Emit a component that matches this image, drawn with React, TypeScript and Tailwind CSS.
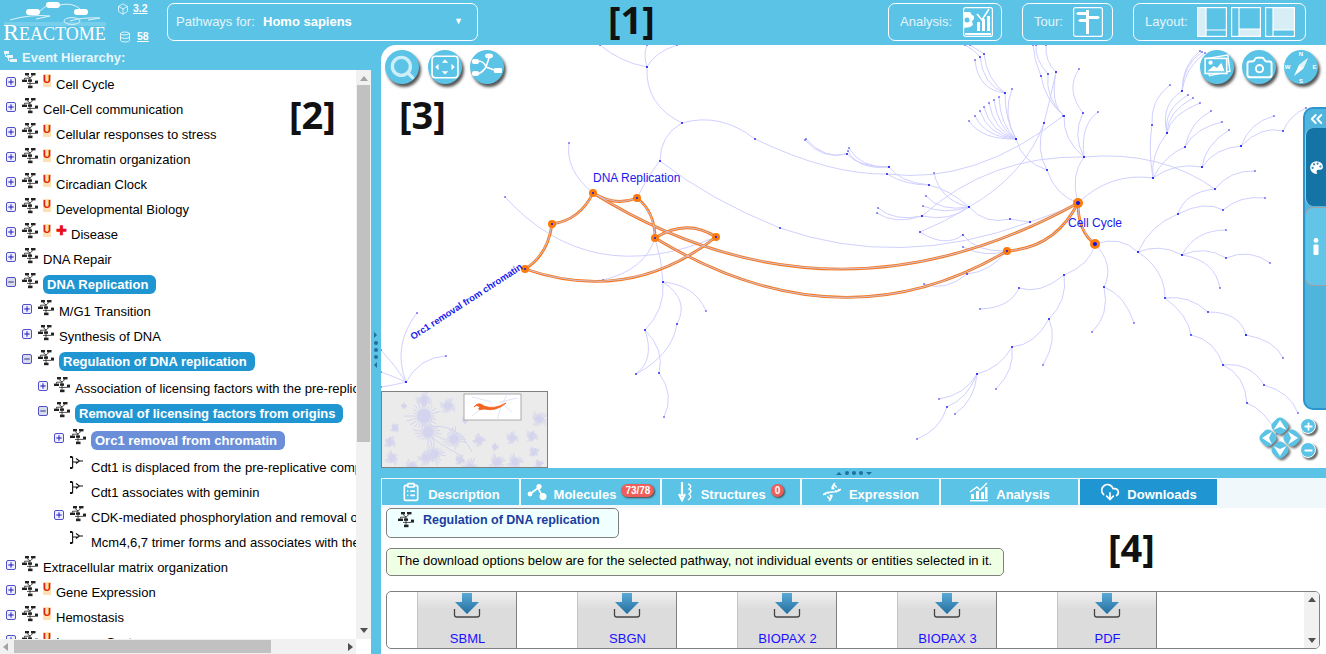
import React from 'react';
import { Box, Database, ClipboardList, Dna, CloudDownload, Camera, Palette, Plus, Minus, ChevronsLeft, Search } from 'lucide-react';

type Row = {
  label: string;
  level: number;
  toggle?: '+' | '-';
  kind?: 'pathway' | 'reaction';
  unique?: boolean;
  disease?: boolean;
  pill?: string;
};

const rows: Row[] = [
  { label: 'Cell Cycle', level: 0, toggle: '+', unique: true },
  { label: 'Cell-Cell communication', level: 0, toggle: '+' },
  { label: 'Cellular responses to stress', level: 0, toggle: '+', unique: true },
  { label: 'Chromatin organization', level: 0, toggle: '+', unique: true },
  { label: 'Circadian Clock', level: 0, toggle: '+', unique: true },
  { label: 'Developmental Biology', level: 0, toggle: '+', unique: true },
  { label: 'Disease', level: 0, toggle: '+', unique: true, disease: true },
  { label: 'DNA Repair', level: 0, toggle: '+' },
  { label: 'DNA Replication', level: 0, toggle: '-', pill: 'bg-[#1f96d2]' },
  { label: 'M/G1 Transition', level: 1, toggle: '+' },
  { label: 'Synthesis of DNA', level: 1, toggle: '+' },
  { label: 'Regulation of DNA replication', level: 1, toggle: '-', pill: 'bg-[#1f96d2]' },
  { label: 'Association of licensing factors with the pre-replicative complex', level: 2, toggle: '+' },
  { label: 'Removal of licensing factors from origins', level: 2, toggle: '-', pill: 'bg-[#1f96d2]' },
  { label: 'Orc1 removal from chromatin', level: 3, toggle: '+', pill: 'bg-[#6a8fd8]' },
  { label: 'Cdt1 is displaced from the pre-replicative complex', level: 3, kind: 'reaction' },
  { label: 'Cdt1 associates with geminin', level: 3, kind: 'reaction' },
  { label: 'CDK-mediated phosphorylation and removal of Cdc6', level: 3, toggle: '+' },
  { label: 'Mcm4,6,7 trimer forms and associates with the replication fork', level: 3, kind: 'reaction' },
  { label: 'Extracellular matrix organization', level: 0, toggle: '+' },
  { label: 'Gene Expression', level: 0, toggle: '+', unique: true },
  { label: 'Hemostasis', level: 0, toggle: '+', unique: true },
  { label: 'Immune System', level: 0, toggle: '+', unique: true },
];

const indent = ['pl-[6px]', 'pl-[22px]', 'pl-[38px]', 'pl-[54px]'];

// x1, y1, cx, cy, x2, y2 in page coordinates
const edges: number[][] = [
  [647, 67, 620, 62, 600, 45], [647, 67, 643, 55, 647, 45], [647, 67, 655, 52, 677, 45],
  [647, 67, 645, 105, 682, 123], [682, 123, 720, 112, 755, 139], [755, 139, 830, 175, 887, 174],
  [682, 123, 660, 135, 660, 161], [660, 161, 650, 172, 637, 198], [660, 161, 710, 200, 780, 228],
  [780, 228, 900, 270, 1030, 222], [1030, 222, 1060, 212, 1078, 203],
  [569, 143, 565, 170, 593, 193],
  [505, 197, 590, 290, 716, 237], [603, 280, 645, 270, 655, 238], [655, 238, 662, 260, 663, 282],
  [663, 282, 695, 285, 706, 311], [663, 282, 690, 300, 677, 324], [663, 282, 665, 310, 645, 330],
  [645, 330, 655, 360, 636, 374], [645, 330, 665, 350, 659, 373], [677, 324, 672, 355, 636, 374],
  [659, 373, 675, 395, 664, 417],
  [406, 382, 392, 345, 417, 313], [406, 382, 420, 357, 446, 356], [406, 382, 395, 365, 381, 350],
  [406, 382, 395, 377, 381, 372], [406, 382, 395, 385, 381, 387],
  [887, 174, 975, 185, 1063, 116], [887, 174, 905, 185, 929, 185], [889, 167, 900, 182, 929, 185],
  [889, 167, 860, 168, 849, 148], [889, 167, 858, 170, 848, 151], [889, 167, 858, 167, 847, 154],
  [847, 154, 825, 160, 806, 139], [847, 154, 822, 160, 805, 140],
  [980, 57, 983, 85, 1005, 93], [975, 60, 978, 90, 1005, 93], [984, 54, 987, 80, 1005, 93],
  [980, 57, 975, 50, 965, 45], [984, 54, 978, 50, 970, 45],
  [1005, 93, 1005, 120, 1016, 139], [1012, 89, 1002, 115, 1016, 139],
  [999, 97, 1000, 125, 1016, 139], [994, 100, 998, 128, 1016, 139], [989, 103, 994, 130, 1016, 139],
  [984, 107, 990, 132, 1016, 139], [980, 111, 988, 135, 1016, 139], [975, 116, 985, 137, 1016, 139],
  [969, 121, 982, 140, 1016, 139], [1016, 139, 1022, 162, 1047, 170], [1047, 170, 1055, 195, 1078, 203],
  [1044, 123, 1035, 150, 1047, 170],
  [1056, 72, 1050, 100, 1044, 123], [1044, 123, 1025, 175, 969, 207], [969, 207, 945, 222, 920, 232],
  [1056, 72, 1045, 62, 1046, 45], [1048, 74, 1035, 60, 1036, 45], [1041, 76, 1034, 60, 1033, 45],
  [1056, 72, 1050, 105, 1064, 116], [1048, 74, 1045, 98, 1064, 116], [1041, 76, 1045, 100, 1064, 116],
  [1064, 116, 1063, 140, 1084, 157], [1083, 113, 1072, 135, 1084, 157], [1098, 112, 1080, 125, 1084, 157],
  [1079, 69, 1065, 90, 1083, 113], [1078, 203, 1070, 175, 1084, 157],
  [1084, 157, 990, 155, 922, 216], [1084, 157, 1160, 150, 1215, 189],
  [934, 173, 940, 200, 969, 207], [929, 185, 950, 190, 969, 207], [926, 196, 940, 212, 969, 207],
  [923, 206, 945, 215, 969, 207], [922, 216, 950, 222, 969, 207], [969, 207, 985, 225, 1010, 219],
  [1010, 219, 1020, 221, 1030, 222], [878, 208, 895, 222, 922, 216], [877, 213, 895, 225, 922, 216],
  [920, 232, 945, 248, 963, 235], [963, 235, 975, 252, 1007, 251], [963, 247, 985, 258, 1007, 251],
  [1007, 251, 990, 272, 967, 274], [967, 274, 945, 292, 924, 284],
  [1078, 203, 1110, 172, 1153, 178], [1153, 178, 1148, 150, 1152, 125], [1153, 178, 1150, 155, 1167, 133],
  [1152, 125, 1150, 100, 1170, 85], [1167, 133, 1160, 105, 1182, 91], [1167, 133, 1163, 110, 1188, 95],
  [1167, 133, 1167, 112, 1193, 98], [1167, 133, 1170, 115, 1200, 103],
  [1182, 91, 1182, 65, 1200, 51], [1182, 91, 1183, 65, 1202, 52], [1182, 91, 1185, 68, 1205, 53],
  [1153, 178, 1165, 155, 1185, 147], [1185, 147, 1190, 122, 1211, 111], [1185, 147, 1195, 128, 1222, 122],
  [1153, 178, 1175, 162, 1202, 167], [1202, 167, 1205, 145, 1229, 130], [1202, 167, 1215, 148, 1241, 146],
  [1241, 146, 1250, 122, 1274, 116], [1241, 146, 1262, 125, 1283, 131], [1283, 131, 1290, 115, 1306, 108],
  [1215, 189, 1230, 170, 1255, 171], [1178, 214, 1185, 192, 1215, 189], [1138, 252, 1150, 225, 1178, 214],
  [1178, 214, 1205, 200, 1223, 210], [1223, 210, 1240, 195, 1265, 198],
  [1095, 244, 1120, 235, 1138, 252], [1138, 252, 1160, 243, 1182, 255], [1138, 252, 1165, 270, 1165, 298],
  [1182, 255, 1195, 230, 1226, 230], [1182, 255, 1205, 245, 1226, 258], [1182, 255, 1215, 260, 1220, 288],
  [1165, 298, 1190, 295, 1208, 312], [1165, 298, 1188, 315, 1191, 335], [1191, 335, 1215, 340, 1223, 365],
  [1208, 312, 1240, 312, 1246, 335], [1246, 335, 1275, 340, 1283, 358], [1223, 365, 1250, 362, 1264, 385],
  [1223, 365, 1245, 375, 1247, 403], [1264, 385, 1290, 392, 1298, 413], [1247, 403, 1265, 410, 1277, 434],
  [1226, 258, 1250, 248, 1270, 263],
  [1095, 244, 1115, 265, 1104, 287], [1104, 287, 1125, 295, 1134, 323], [1104, 287, 1110, 315, 1092, 332],
  [1095, 244, 1090, 265, 1064, 275], [1064, 275, 1040, 295, 1019, 288], [1019, 288, 1010, 308, 980, 309],
  [1064, 275, 1068, 300, 1049, 319], [1049, 319, 1058, 340, 1043, 365], [1049, 319, 1035, 345, 1012, 347],
  [1012, 347, 1015, 370, 996, 389], [1012, 347, 1000, 368, 977, 374], [977, 374, 965, 395, 939, 399],
  [977, 374, 968, 398, 947, 407], [977, 374, 975, 400, 955, 414], [947, 407, 940, 430, 917, 439],
];

// nodes drawn a little larger than the rest
const hubs = [[406, 382], [1016, 139], [1153, 178], [1202, 167], [1241, 146], [1138, 252], [1182, 255], [1167, 133], [1246, 335]];

// x1, y1, cx, cy, x2, y2
const orangeEdges: number[][] = [
  [525, 269, 548, 255, 552, 224], [552, 224, 580, 220, 593, 193], [593, 193, 615, 207, 637, 198],
  [637, 198, 655, 212, 655, 238], [655, 238, 687, 218, 716, 237], [525, 269, 630, 305, 716, 237],
  [593, 193, 830, 340, 1078, 203], [655, 238, 840, 350, 1007, 251], [1007, 251, 1055, 248, 1078, 203],
  [1078, 203, 1078, 232, 1095, 244],
];

const orangeNodes = [
  [525, 269, 4], [552, 224, 4], [593, 193, 4], [637, 198, 4], [655, 238, 4], [716, 237, 4],
  [1007, 251, 4], [1078, 203, 5], [1095, 244, 5],
];

// cx, cy, r in minimap coordinates
const stars = [
  [42, 24, 20], [46, 40, 15], [42, 8, 9], [66, 14, 9], [8, 50, 7], [13, 36, 5], [10, 66, 8], [52, 62, 12],
  [72, 47, 13], [44, 66, 9], [88, 76, 11], [78, 68, 6], [30, 75, 9], [115, 70, 9], [133, 70, 9], [97, 48, 7],
  [113, 55, 4], [130, 46, 7], [150, 44, 7], [157, 27, 9], [152, 60, 6], [157, 72, 5], [83, 28, 4], [22, 14, 3],
];

const PathwayIcon = () => (
  <svg width="16" height="16" viewBox="0 0 16 16" className="shrink-0">
    <g fill="#222">
      <rect x="3" y="0" width="4" height="2.4" />
      <rect x="9" y="0" width="4.5" height="2.4" />
      <rect x="0" y="6.6" width="5" height="2.4" />
      <rect x="6" y="6.4" width="4" height="2.4" />
      <rect x="13" y="7.6" width="3" height="3" />
      <rect x="6" y="12.6" width="4.5" height="2.6" />
    </g>
    <path d="M5 2.4 L8 5 L11 2.4 M8 5 V12.6 M2.5 6.6 V5.2 H8 M5 10.4 H13" stroke="#222" strokeWidth="0.8" fill="none" />
  </svg>
);

const ReactionIcon = () => (
  <svg width="14" height="14" viewBox="0 0 14 14" className="shrink-0">
    <path d="M1 1 H2.6 V12 H1 M2.6 6 H8 M6 2.5 L9.5 5 L6 7.5 M9.5 5 H13" stroke="#111" strokeWidth="1.1" fill="none" />
    <rect x="0" y="0" width="2" height="2" fill="#111" />
    <rect x="0" y="11" width="2" height="2" fill="#111" />
  </svg>
);

const Toggle = ({ sign }: { sign: '+' | '-' }) => (
  <div className={`w-[10px] h-[10px] shrink-0 rounded-[2px] border border-[#5050c8] flex items-center justify-center ${sign === '+' ? 'bg-[#eeeeff]' : 'bg-[#d8dcec]'}`}>
    {sign === '+' ? (
      <Plus size={8} strokeWidth={3} className="text-[#1a1ac0]" />
    ) : (
      <Minus size={8} strokeWidth={3} className="text-[#30307a]" />
    )}
  </div>
);

const TreeRow = ({ row }: { row: Row }) => (
  <div className={`flex items-start whitespace-nowrap ${row.pill ? 'h-[27px]' : 'h-[25px]'} ${indent[row.level]}`}>
    <div className="w-[10px] mt-[5px] mr-[6px] shrink-0">{row.toggle && <Toggle sign={row.toggle} />}</div>
    <div className="w-[16px] mt-[1px] shrink-0">{row.kind === 'reaction' ? <ReactionIcon /> : <PathwayIcon />}</div>
    {row.unique && (
      <span className="ml-[5px] mt-[2px] w-[8px] h-[13px] bg-[#fde0b4] text-[#e02000] text-[11px] leading-[11px] font-bold text-center shrink-0">U</span>
    )}
    {row.disease && (
      <span className="ml-[5px] mt-[3px] w-[10px] text-[#e8101a] text-[13px] leading-[11px] font-black shrink-0">✚</span>
    )}
    {row.pill ? (
      <span className={`ml-[5px] mt-[3px] pl-[4px] pr-[8px] h-[19px] leading-[19px] rounded-[6px] text-white font-bold text-[13px] ${row.pill}`}>{row.label}</span>
    ) : (
      <span className="ml-[5px] leading-[25px] text-[13px] text-black">{row.label}</span>
    )}
  </div>
);

const Logo = () => (
  <div className="relative w-[110px] h-[45px] shrink-0">
    <svg width="110" height="45" viewBox="0 0 110 45" className="absolute left-0 top-0">
      <g fill="#ffffff">
        <rect x="26" y="9" width="14" height="6" rx="3" />
        <rect x="46" y="2" width="14" height="6" rx="3" />
        <rect x="74" y="9" width="14" height="6" rx="3" />
      </g>
      <path d="M60 5 C68 3 76 5 80 9 M40 11 L46 6 M10 20 Q30 14 50 16 L36 19 M70 21 Q82 17 100 18 L88 20" stroke="#dff3fa" strokeWidth="1" fill="none" />
      <ellipse cx="72" cy="21" rx="8" ry="3.4" fill="none" stroke="#dff3fa" strokeWidth="1" />
      <path d="M4 23 H106 M4 25 H106" stroke="#cfeef8" strokeWidth="0.5" />
    </svg>
    <div className="absolute left-[3px] top-[21px] text-white font-['Liberation_Serif',serif] leading-[22px] whitespace-nowrap">
      <span className="text-[24px]">R</span>
      <span className="text-[18px]">EACTOME</span>
    </div>
  </div>
);

const LayoutIcon = ({ variant }: { variant: number }) => (
  <svg width="30" height="30" viewBox="0 0 30 30" className="shrink-0">
    {variant === 0 && <><rect x="1" y="1" width="8" height="28" fill="#d8eef6" /><path d="M9 1 V29 M9 23 H29" stroke="#fff" strokeWidth="1.2" /></>}
    {variant === 1 && <><rect x="8" y="22" width="21" height="7" fill="#d8eef6" /><path d="M8 1 V29 M8 22 H29" stroke="#fff" strokeWidth="1.2" /></>}
    {variant === 2 && <><rect x="8" y="1" width="21" height="22" fill="#d8eef6" /><path d="M8 1 V29 M8 23 H29" stroke="#fff" strokeWidth="1.2" /></>}
    <rect x="0.6" y="0.6" width="28.8" height="28.8" fill="none" stroke="#fff" strokeWidth="1.2" />
  </svg>
);

const AnalysisIcon = () => (
  <svg width="30" height="30" viewBox="0 0 30 30" className="shrink-0">
    <rect x="0.6" y="0.6" width="28.8" height="28.8" rx="2" fill="none" stroke="#fff" strokeWidth="1.2" />
    <path d="M1 5 H7 L9 8 L11 9 V12 L9 14 L10 18 L7 20 L1 21 Z" fill="#fff" />
    <circle cx="4" cy="13" r="2.5" fill="#5bc3e6" />
    <path d="M14 7 L19 13 L26 2" stroke="#fff" strokeWidth="1.6" fill="none" />
    <rect x="14" y="15" width="3" height="9" fill="#fff" />
    <rect x="19" y="12" width="3" height="12" fill="#fff" />
    <rect x="24" y="9" width="3" height="15" fill="#fff" />
    <rect x="2" y="26" width="26" height="2" fill="#fff" />
  </svg>
);

const TourIcon = () => (
  <svg width="30" height="30" viewBox="0 0 30 30" className="shrink-0">
    <rect x="0.6" y="0.6" width="28.8" height="28.8" rx="2" fill="none" stroke="#fff" strokeWidth="1.2" />
    <rect x="13" y="3" width="3" height="24" fill="#fff" />
    <path d="M13 5 H5 L3 6.5 L5 8 H13 Z M16 9 H25 L27 10.5 L25 12 H16 Z M13 12 H7 L5 13.5 L7 15 H13 Z" fill="#fff" />
  </svg>
);

const RoundButton = ({ className, children }: { className: string; children: React.ReactNode }) => (
  <div className={`absolute w-[34px] h-[34px] rounded-full bg-[#5bc3e6] shadow-[2px_3px_3px_#555] flex items-center justify-center text-white ${className}`}>
    {children}
  </div>
);

const CompassIcon = () => (
  <svg width="34" height="34" viewBox="0 0 34 34">
    <path d="M24 8 L19 19 L10 26 L15 15 Z" fill="#fff" />
    <path d="M24 8 L15 15 L19 19 Z" fill="#dff3fa" />
    <g fill="#fff" fontSize="6" fontWeight="bold" textAnchor="middle" fontFamily="Liberation Sans">
      <text x="17" y="6">N</text>
      <text x="17" y="33">S</text>
      <text x="3.5" y="19">W</text>
      <text x="30.5" y="19">E</text>
    </g>
  </svg>
);

const NavPad = () => (
  <svg width="48" height="48" viewBox="0 0 48 48" className="absolute left-[875px] top-[369px] drop-shadow-[2px_2px_1px_#777]">
    {[0, 90, 180, 270].map(angle => (
      <g key={angle} transform={`rotate(${angle} 24 24)`}>
        <rect x="-7.5" y="-7.5" width="15" height="15" rx="5" fill="#5bc3e6" transform="translate(24 12) rotate(45)" />
        <path d="M24 6 L30.5 16 L24 13 L17.5 16 Z" fill="#fff" />
      </g>
    ))}
  </svg>
);

const Minimap = () => (
  <div className="absolute left-0 top-[346px] w-[167px] h-[77px] bg-[#ebebeb] border border-[#808080] overflow-hidden">
    <svg width="165" height="75" viewBox="0 0 165 75" className="absolute left-0 top-0">
      {stars.map(([cx, cy, r], i) => (
        <g key={i} stroke="#d4d4ee" strokeWidth="1">
          {Array.from({ length: 22 }).map((_, k) => {
            const a = (k / 22) * Math.PI * 2 + i;
            const len = r * (0.55 + ((k * 7 + i * 3) % 6) * 0.09);
            return <line key={k} x1={cx} y1={cy} x2={cx + Math.cos(a) * len} y2={cy + Math.sin(a) * len} />;
          })}
          <circle cx={cx} cy={cy} r={r * 0.35} fill="#d4d4ee" stroke="none" />
        </g>
      ))}
      <path d="M35 27 Q45 12 43 38 Q52 50 80 64 M47 35 Q75 30 90 60" stroke="#d4d4ee" fill="none" />
      <rect x="82" y="2" width="57" height="26" fill="#fff" stroke="#aaa" strokeWidth="1" />
      <g stroke="#dcdcf4" strokeWidth="0.8" fill="none">
        <path d="M125 2 L118 18 M118 10 L135 6 M118 10 L130 20 M90 5 L110 10 M115 28 L118 18 M90 24 L100 16" />
      </g>
      <path d="M92 15 Q96 9 102 14 Q112 18 124 11 Q114 20 102 17 Q94 19 98 15 Q94 12 92 15 Z" fill="#f2631f" stroke="#f2631f" strokeWidth="0.8" />
    </svg>
  </div>
);

const Canvas = () => (
  <div className="relative h-[423px] bg-white rounded-tl-[15px] overflow-hidden shrink-0">
    <svg width="945" height="423" viewBox="381 45 945 423" className="absolute left-0 top-0">
      <g fill="none" stroke="#d0d0ff" strokeWidth="1">
        {edges.map((e, i) => (
          <path key={i} d={`M${e[0]} ${e[1]} Q${e[2]} ${e[3]} ${e[4]} ${e[5]}`} />
        ))}
      </g>
      <g fill="#3030f0">
        {edges.map((e, i) => (
          <React.Fragment key={i}>
            <rect x={e[0] - 0.7} y={e[1] - 0.7} width="1.4" height="1.4" />
            <rect x={e[4] - 0.7} y={e[5] - 0.7} width="1.4" height="1.4" />
          </React.Fragment>
        ))}
        {hubs.map(([x, y], i) => (
          <rect key={i} x={x - 1} y={y - 1} width="2" height="2" />
        ))}
      </g>
      <g fill="none">
        {orangeEdges.map((e, i) => (
          <path key={i} d={`M${e[0]} ${e[1]} Q${e[2]} ${e[3]} ${e[4]} ${e[5]}`} stroke="#f9781a" strokeWidth="2.8" />
        ))}
        {orangeEdges.map((e, i) => (
          <path key={i} d={`M${e[0]} ${e[1]} Q${e[2]} ${e[3]} ${e[4]} ${e[5]}`} stroke="#c8c8f0" strokeWidth="0.9" />
        ))}
      </g>
      {orangeNodes.map(([x, y, r], i) => (
        <g key={i}>
          <circle cx={x} cy={y} r={r} fill="#fb7a0c" />
          <circle cx={x} cy={y} r={r > 4 ? 2 : 1} fill="#1010ee" />
        </g>
      ))}
      <text x="593" y="182" fontSize="12" fill="#1a1aee" fontFamily="Liberation Sans">DNA Replication</text>
      <text x="1068" y="227" fontSize="12" fill="#1a1aee" fontFamily="Liberation Sans">Cell Cycle</text>
      <text x="413" y="340" fontSize="9.4" fontWeight="bold" fill="#1a1aee" fontFamily="Liberation Sans" transform="rotate(-33 413 340)">Orc1 removal from chromatin</text>
    </svg>

    <Minimap />

    <RoundButton className="left-[4px] top-[5px]">
      <Search size={27} strokeWidth={3} className="text-[#cdeef9]" />
    </RoundButton>
    <RoundButton className="left-[47px] top-[5px]">
      <svg width="28" height="24" viewBox="0 0 26 22">
        <rect x="1" y="1" width="24" height="20" rx="3" fill="none" stroke="#fff" strokeWidth="1.5" />
        <path d="M13 4 L16 7 H10 Z M13 18 L16 15 H10 Z M4 11 L7 8 V14 Z M22 11 L19 8 V14 Z" fill="#fff" />
      </svg>
    </RoundButton>
    <RoundButton className="left-[89px] top-[5px]">
      <svg width="30" height="28" viewBox="0 0 30 28">
        <path d="M6 8 Q12 8 14 14 Q11 19 6 21 M14 14 L17 5 M14 14 L25 18" stroke="#fff" strokeWidth="1.6" fill="none" />
        <rect x="0" y="6" width="7" height="5" rx="2" fill="#fff" />
        <rect x="0" y="18" width="7" height="5" rx="2" fill="#fff" />
        <ellipse cx="17" cy="3" rx="4" ry="2.4" fill="#fff" />
        <rect x="22" y="15" width="8" height="5" rx="1" fill="#fff" />
      </svg>
    </RoundButton>

    <RoundButton className="left-[819px] top-[5px]">
      <svg width="28" height="26" viewBox="0 0 26 24">
        <path d="M4 4 L23 1 L25 16 L6 20 Z" fill="none" stroke="#fff" strokeWidth="1.3" />
        <rect x="2" y="4" width="20" height="14" fill="#5bc3e6" stroke="#fff" strokeWidth="1.5" />
        <circle cx="7" cy="8" r="2" fill="#fff" />
        <path d="M4 16 L10 11 L13 13 L17 8 L20 16 Z" fill="#fff" />
      </svg>
    </RoundButton>
    <RoundButton className="left-[861px] top-[5px]">
      <Camera size={29} strokeWidth={1.6} />
    </RoundButton>
    <RoundButton className="left-[903px] top-[5px]">
      <CompassIcon />
    </RoundButton>

    {/* side panel */}
    <div className="absolute left-[922px] top-[62px] w-[23px] h-[303px] rounded-l-[10px] border-[2px] border-r-0 border-[#2a95cf] bg-[#4fb5dd] flex flex-col">
      <div className="h-[19px] flex items-center pl-[2px] text-white">
        <ChevronsLeft size={20} strokeWidth={2.4} />
      </div>
      <div className="h-[78px] rounded-l-[8px] bg-[#1474a6] border-l border-[#9fd0e6] flex items-center justify-center text-white">
        <Palette size={17} fill="#fff" className="text-[#1474a6]" />
      </div>
      <div className="h-[79px] mt-[1px] rounded-l-[8px] bg-[#62c4e6] border border-r-0 border-[#a89f9f] flex items-center justify-center">
        <svg width="6" height="17" viewBox="0 0 6 17">
          <circle cx="3" cy="2.4" r="2.4" fill="#fff" />
          <rect x="0.5" y="6.5" width="5" height="10.5" rx="1" fill="#fff" />
        </svg>
      </div>
    </div>

    {/* navigation */}
    <NavPad />
    <div className="absolute left-[919px] top-[373px] w-[16px] h-[16px] rounded-full bg-[#5bc3e6] border border-white shadow-[2px_2px_2px_#666] flex items-center justify-center text-white"><Plus size={11} strokeWidth={4} /></div>
    <div className="absolute left-[919px] top-[397px] w-[16px] h-[16px] rounded-full bg-[#5bc3e6] border border-white shadow-[2px_2px_2px_#666] flex items-center justify-center text-white"><Minus size={11} strokeWidth={4} /></div>
  </div>
);

const MoleculesIcon = () => (
  <svg width="20" height="18" viewBox="0 0 20 18">
    <path d="M3 11 L11 5 L16 14" stroke="#fff" strokeWidth="1.6" fill="none" />
    <circle cx="3" cy="11" r="2.4" fill="#fff" />
    <circle cx="12" cy="3.5" r="2.6" fill="#fff" />
    <circle cx="16" cy="13.5" r="3.5" fill="#fff" />
  </svg>
);

const StructuresIcon = () => (
  <svg width="16" height="20" viewBox="0 0 16 20">
    <path d="M4 0 V14 M1 12 L4 18 L7 12" stroke="#fff" strokeWidth="2.2" fill="none" />
    <path d="M10 2 Q15 4 11 7 Q15 9 11 12 Q15 15 10 18" stroke="#fff" strokeWidth="1.4" fill="none" />
  </svg>
);

const ChartIcon = () => (
  <svg width="20" height="20" viewBox="0 0 20 20">
    <path d="M1 10 L8 5 L11 8 L18 1" stroke="#fff" strokeWidth="1.4" fill="none" />
    <rect x="2" y="12" width="3" height="5" fill="#fff" />
    <rect x="7" y="9" width="3" height="8" fill="#fff" />
    <rect x="12" y="10" width="3" height="7" fill="#fff" />
    <rect x="16" y="5" width="2.5" height="12" fill="#fff" />
    <rect x="1" y="18" width="18" height="1.4" fill="#fff" />
  </svg>
);

const tabs = [
  { label: 'Description', width: 'w-[137px]', icon: <ClipboardList size={20} /> },
  { label: 'Molecules', width: 'w-[139px]', icon: <MoleculesIcon />, badge: '73/78' },
  { label: 'Structures', width: 'w-[138px]', icon: <StructuresIcon />, badge: '0' },
  { label: 'Expression', width: 'w-[137px]', icon: <Dna size={20} /> },
  { label: 'Analysis', width: 'w-[137px]', icon: <ChartIcon /> },
  { label: 'Downloads', width: 'w-[137px]', icon: <CloudDownload size={20} />, active: true },
];

const DownloadIcon = () => (
  <svg width="28" height="30" viewBox="0 0 28 30" className="shrink-0">
    <defs>
      <linearGradient id="dl" x1="0" y1="0" x2="0" y2="1">
        <stop offset="0" stopColor="#5aa9d6" />
        <stop offset="1" stopColor="#206f9f" />
      </linearGradient>
    </defs>
    <path d="M9 1 H19 V10 H26 L14 22 L2 10 H9 Z" fill="url(#dl)" />
    <path d="M1.5 17 V23 Q1.5 25 4 25 H24 Q26.5 25 26.5 23 V17" stroke="#444" strokeWidth="1.3" fill="none" />
  </svg>
);

const formats = ['SBML', 'SBGN', 'BIOPAX 2', 'BIOPAX 3', 'PDF'];

const Details = () => (
  <div className="flex-1 bg-white flex flex-col min-h-0">
    <div className="flex h-[30px] pt-[1px] pl-[1px] gap-[2px] bg-[#f0f8fc] shrink-0 items-start">
      {tabs.map(tab => (
        <div
          key={tab.label}
          className={`${tab.width} h-[26px] flex items-center justify-center gap-[7px] text-white font-bold text-[13px] ${tab.active ? 'bg-[#1f96d2]' : 'bg-[#5bc3e6]'}`}
        >
          {tab.icon}
          <span className="pt-[5px]">{tab.label}</span>
          {tab.badge && (
            <span className="-ml-[2px] -mt-[3px] px-[4px] h-[13px] leading-[13px] rounded-[7px] bg-[#ee5f5b] text-[10px] shadow-[1px_1px_2px_#444]">{tab.badge}</span>
          )}
        </div>
      ))}
    </div>
    <div className="px-[5px] flex-1 min-h-0">
      <div className="w-[233px] h-[30px] rounded-[5px] border border-[#808080] bg-[#f0ffff] flex items-start pl-[11px] pt-[3px]">
        <PathwayIcon />
        <span className="ml-[9px] text-[12.5px] leading-[17px] font-bold text-[#1a3d9e]">Regulation of DNA replication</span>
      </div>
      <div className="w-[618px] h-[28px] mt-[10px] rounded-[5px] border border-[#808080] bg-[#efffe4] pl-[10px] text-[13px] leading-[23px] text-black whitespace-nowrap">
        The download options below are for the selected pathway, not individual events or entities selected in it.
      </div>
      <div className="w-[934px] h-[58px] mt-[15px] rounded-[5px] border border-[#808080] flex overflow-hidden">
        <div className="flex-1 flex pl-[30px] gap-[60px]">
          {formats.map(f => (
            <div key={f} className="w-[100px] h-full bg-gradient-to-b from-[#f0f0f0] to-[#dcdcdc] to-30% border-l border-l-[#c4c4c4] border-r border-r-[#808080] flex flex-col items-center">
              <DownloadIcon />
              <span className="ml-[1px] mt-[5px] text-[13px] leading-[24px] text-[#1a10ff] shrink-0">{f}</span>
            </div>
          ))}
        </div>
        <div className="w-[15px] bg-[#f1f1f1] flex flex-col items-center justify-between py-[5px] shrink-0">
          <div className="w-0 h-0 border-x-[4px] border-x-transparent border-b-[5px] border-b-[#505050]"></div>
          <div className="w-0 h-0 border-x-[4px] border-x-transparent border-t-[5px] border-t-[#505050]"></div>
        </div>
      </div>
    </div>
  </div>
);

const Dots = ({ vertical }: { vertical?: boolean }) => (
  <div className={`flex items-center gap-[3px] ${vertical ? 'flex-col' : ''}`}>
    <div className={vertical ? 'w-0 h-0 border-y-[3px] border-y-transparent border-l-[3px] border-l-[#1f6f9f]' : 'w-0 h-0 border-x-[3px] border-x-transparent border-b-[3px] border-b-[#1f6f9f]'}></div>
    <div className="w-[4px] h-[4px] rounded-full bg-[#1f6f9f]"></div>
    <div className="w-[4px] h-[4px] rounded-full bg-[#1f6f9f]"></div>
    <div className="w-[4px] h-[4px] rounded-full bg-[#1f6f9f]"></div>
    <div className={vertical ? 'w-0 h-0 border-y-[3px] border-y-transparent border-r-[3px] border-r-[#1f6f9f]' : 'w-0 h-0 border-x-[3px] border-x-transparent border-t-[3px] border-t-[#1f6f9f]'}></div>
  </div>
);

const App: React.FC = () => {
  return (
    <div className="relative w-[1326px] h-[654px] overflow-hidden bg-[#5bc3e6] font-['Liberation_Sans',Arial,sans-serif]">
      {/* Header */}
      <div className="h-[45px] flex items-start text-white">
        <Logo />
        <div className="w-[43px] shrink-0 pt-[2px] pl-[7px]">
          <div className="flex items-center h-[14px] gap-[4px]">
            <Box size={12} strokeWidth={1.5} />
            <span className="text-[10.5px] font-bold underline">3.2</span>
          </div>
          <div className="flex items-center h-[14px] gap-[6px] mt-[14px] pl-[2px]">
            <Database size={12} strokeWidth={1.6} />
            <span className="text-[10.5px] font-bold underline">58</span>
          </div>
        </div>
        <div className="ml-[14px] mt-[3px] w-[311px] h-[38px] rounded-[7px] border border-white flex items-center pl-[8px] pr-[14px] text-[13px]">
          <span className="text-[#e4f5fb] w-[87px]">Pathways for:</span>
          <span className="font-bold flex-1">Homo sapiens</span>
          <span className="text-[9px]">▼</span>
        </div>
        <div className="ml-[410px] mt-[3px] w-[114px] h-[38px] rounded-[7px] border border-white flex items-center pl-[11px] gap-[11px] text-[13px] text-[#e4f5fb]">
          Analysis:
          <AnalysisIcon />
        </div>
        <div className="ml-[20px] mt-[3px] w-[91px] h-[38px] rounded-[7px] border border-white flex items-center pl-[11px] gap-[10px] text-[13px] text-[#e4f5fb]">
          Tour:
          <TourIcon />
        </div>
        <div className="ml-[20px] mt-[3px] w-[173px] h-[38px] rounded-[7px] border border-white flex items-center pl-[11px] text-[13px] text-[#e4f5fb]">
          <span className="w-[52px]">Layout:</span>
          <div className="flex gap-[4px]">
            <LayoutIcon variant={0} />
            <LayoutIcon variant={1} />
            <LayoutIcon variant={2} />
          </div>
        </div>
      </div>

      <div className="flex h-[609px]">
        {/* Hierarchy */}
        <div className="w-[371px] flex flex-col shrink-0">
          <div className="h-[25px] flex items-center pl-[4px] gap-[5px] text-[13px] font-bold text-[#e8f7fc] shrink-0">
            <svg width="13" height="13" viewBox="0 0 13 13">
              <path d="M0 0 H5 V3 H0 Z M3 4 H9 V7 H3 Z M6 8 H13 V11 H6 Z" fill="#e8f7fc" />
              <path d="M1.5 3 V5.5 H3 M4.5 7 V9.5 H6" stroke="#e8f7fc" fill="none" />
            </svg>
            Event Hierarchy:
          </div>
          <div className="flex flex-1 min-h-0 bg-white">
            <div className="w-[356px] overflow-hidden pt-[2px]">
              {rows.map(r => (
                <TreeRow key={r.label} row={r} />
              ))}
            </div>
            <div className="w-[15px] bg-[#f1f1f1] flex flex-col items-center pt-[6px]">
              <div className="w-0 h-0 border-x-[4px] border-x-transparent border-b-[5px] border-b-[#a3a3a3]"></div>
              <div className="w-[13px] h-[357px] mt-[4px] bg-[#c1c1c1]"></div>
              <div className="flex-1"></div>
              <div className="w-0 h-0 border-x-[4px] border-x-transparent border-t-[5px] border-t-[#505050] mb-[6px]"></div>
            </div>
          </div>
          <div className="h-[15px] flex bg-white shrink-0">
            <div className="w-[356px] bg-[#f1f1f1] flex items-center pl-[3px]">
              <div className="w-0 h-0 border-y-[4px] border-y-transparent border-r-[5px] border-r-[#a3a3a3]"></div>
              <div className="w-[257px] h-[13px] ml-[6px] bg-[#c1c1c1]"></div>
              <div className="flex-1"></div>
              <div className="w-0 h-0 border-y-[4px] border-y-transparent border-l-[5px] border-l-[#505050] mr-[3px]"></div>
            </div>
          </div>
        </div>

        <div className="w-[10px] shrink-0 flex items-center justify-center pr-[1px]">
          <Dots vertical />
        </div>

        <div className="flex-1 flex flex-col min-w-0">
          <Canvas />
          <div className="h-[10px] shrink-0 flex items-center justify-center">
            <Dots />
          </div>
          <Details />
        </div>
      </div>

      {/* Region labels */}
      <span className="absolute left-[608px] top-[-5px] text-[38px] leading-[48px] font-bold text-[#111] font-['Open_Sans',sans-serif]">[1]</span>
      <span className="absolute left-[289px] top-[90px] text-[38px] leading-[48px] font-bold text-[#111] font-['Open_Sans',sans-serif]">[2]</span>
      <span className="absolute left-[399px] top-[90px] text-[38px] leading-[48px] font-bold text-[#111] font-['Open_Sans',sans-serif]">[3]</span>
      <span className="absolute left-[1108px] top-[523px] text-[38px] leading-[48px] font-bold text-[#111] font-['Open_Sans',sans-serif]">[4]</span>
    </div>
  );
};

export default App;
